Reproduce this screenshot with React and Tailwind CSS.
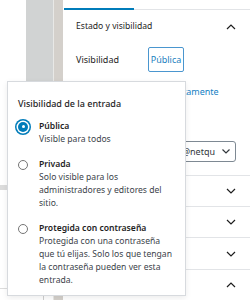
function ChevronUp() {
  return (
    <svg width="10" height="6" viewBox="0 0 10 6" fill="none" stroke="#1e1e1e" strokeWidth="1.2">
      <polyline points="1,5 5,1 9,5" />
    </svg>
  )
}

function ChevronDown() {
  return (
    <svg width="10" height="6" viewBox="0 0 10 6" fill="none" stroke="#1e1e1e" strokeWidth="1.2">
      <polyline points="1,1 5,5 9,1" />
    </svg>
  )
}

function Radio({ checked }) {
  if (checked) {
    return (
      <span className="mt-[1.5px] flex h-[10px] w-[10px] shrink-0 items-center justify-center rounded-full bg-[#007cba] ring-[1.5px] ring-[#007cba] ring-offset-[1.5px] ring-offset-white">
        <span className="h-[3px] w-[3px] rounded-full bg-white" />
      </span>
    )
  }
  return <span className="mt-[1.5px] h-[10px] w-[10px] shrink-0 rounded-full border border-[#757575] bg-white" />
}

export default function App() {
  const options = [
    { label: "Pública", lines: ["Visible para todos"], checked: true },
    { label: "Privada", lines: ["Solo visible para los", "administradores y editores del", "sitio."] },
    {
      label: "Protegida con contraseña",
      lines: ["Protegida con una contraseña", "que tú elijas. Solo los que tengan", "la contraseña pueden ver esta", "entrada."],
    },
  ]

  const panels = ["Enlace permanente", "Categorías", "Etiquetas"]

  return (
    <div className="relative flex h-[300px] w-[250px] overflow-hidden bg-white font-['Noto_Sans',sans-serif] text-[8.6px] leading-[13px] text-[#1e1e1e]">
      {/* background columns behind the popover */}
      <div className="flex w-[28px] flex-col">
        <div className="h-[185px]" />
        <div className="h-[5px] bg-[#dcdcdc]" />
        <div className="h-[98px]" />
        <div className="border-t border-[#dcdcdc]" />
      </div>
      <div className="flex w-[28px] flex-col">
        <div className="h-[290px] bg-[#d1d3d3]" />
        <div className="w-[18px] flex-1 border-r border-[#cfcfcf]" />
      </div>
      <div className="w-px bg-[#e8e8e6]" />
      <div className="w-[10px] bg-[#d4d0cb]" />
      <div className="w-px bg-white" />

      {/* sidebar */}
      <div className="flex flex-1 flex-col bg-white">
        <div className="flex h-[11px] items-end">
          <div className="h-[2px] w-[70px] bg-[#007cba]" />
          <div className="h-px flex-1 bg-[#e2e4e7]" />
        </div>

        <div className="border-b border-[#e2e4e7] pb-[13px] pl-[12px] pr-[14px]">
          <div className="flex h-[34px] items-center justify-between">
            <span>Estado y visibilidad</span>
            <ChevronUp />
          </div>
          <div className="mt-[3px] flex h-[25px] items-center text-[9px]">
            <span className="w-[72px]">Visibilidad</span>
            <span className="flex h-[25px] w-[36px] items-center justify-center rounded-[2px] border border-[#4a96cf] text-[#1b7fc0]">
              Pública
            </span>
          </div>
          <div className="mt-[13px] flex h-[13px] items-center text-[9px]">
            <span className="w-[72px]">Publicar</span>
            <span className="text-[#1581c4]">Inmediatamente</span>
          </div>
          <div className="mt-[18px] flex h-[13px] items-center text-[9px]">
            <span className="w-[72px]">Plantilla</span>
            <span className="text-[#1581c4]">Ninguna</span>
          </div>
          <div className="mt-[12px] flex h-[21px] w-[160px] items-center rounded-[3px] border border-[#7e8993] pl-[6px] pr-[4px] text-[9px] text-[#32373c]">
            <div className="flex min-w-0 flex-1 justify-end overflow-hidden whitespace-nowrap">
              <span>webmaster.proyecto@netqu</span>
            </div>
            <span className="ml-[6px] flex w-[10px] justify-center">
              <svg width="8" height="5" viewBox="0 0 8 5" fill="none" stroke="#32373c" strokeWidth="1.2">
                <polyline points="0.5,0.5 4,4 7.5,0.5" />
              </svg>
            </span>
          </div>
        </div>

        {panels.map((title) => (
          <div key={title} className="flex h-[35px] items-center justify-between border-b border-[#e2e4e7] pl-[12px] pr-[14px]">
            <span>{title}</span>
            <ChevronDown />
          </div>
        ))}
        <div className="flex h-[34px] items-center justify-between pl-[12px] pr-[14px]">
          <span>Atributos de página</span>
          <ChevronUp />
        </div>
      </div>

      {/* visibility popover */}
      <div className="absolute left-[7px] top-[81px] h-[215px] w-[179px] border border-[#d7dade] bg-white pl-[10px] pt-[15px] shadow-[0_2px_6px_rgba(0,0,0,0.08)]">
        <div className="text-[9px] font-medium">Visibilidad de la entrada</div>
        <div className="mt-[10px] flex flex-col gap-[12px]">
          {options.map((o) => (
            <div key={o.label} className="flex items-start gap-[11px]">
              <Radio checked={o.checked} />
              <div className="whitespace-nowrap">
                <div className="font-semibold">{o.label}</div>
                <p className="text-[#3c434a]">
                  {o.lines.map((l, i) => (
                    <span key={l}>
                      {i > 0 && <br />}
                      {l}
                    </span>
                  ))}
                </p>
              </div>
            </div>
          ))}
        </div>
      </div>
    </div>
  )
}
